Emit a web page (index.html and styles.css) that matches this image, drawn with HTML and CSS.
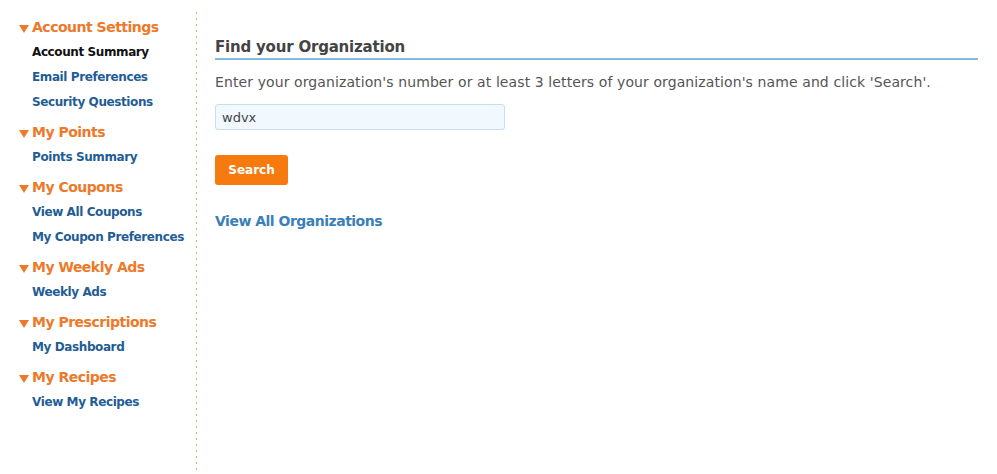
FILE: index.html
```html
<!DOCTYPE html>
<html>
<head>
<meta charset="utf-8">
<link rel="stylesheet" href="styles.css">
</head>
<body>
<div class="page">
  <nav class="sidebar">
    <div class="group">
      <div class="group-title"><span class="tri"></span>Account Settings</div>
      <a class="item current">Account Summary</a>
      <a class="item">Email Preferences</a>
      <a class="item">Security Questions</a>
    </div>
    <div class="group">
      <div class="group-title"><span class="tri"></span>My Points</div>
      <a class="item">Points Summary</a>
    </div>
    <div class="group">
      <div class="group-title"><span class="tri"></span>My Coupons</div>
      <a class="item">View All Coupons</a>
      <a class="item">My Coupon Preferences</a>
    </div>
    <div class="group">
      <div class="group-title"><span class="tri"></span>My Weekly Ads</div>
      <a class="item">Weekly Ads</a>
    </div>
    <div class="group">
      <div class="group-title"><span class="tri"></span>My Prescriptions</div>
      <a class="item">My Dashboard</a>
    </div>
    <div class="group">
      <div class="group-title"><span class="tri"></span>My Recipes</div>
      <a class="item">View My Recipes</a>
    </div>
  </nav>
  <div class="divider"></div>
  <main class="content">
    <h2 class="title">Find your Organization</h2>
    <p class="intro">Enter your organization's number or at least 3 letters of your organization's name and click 'Search'.</p>
    <input class="search-input" type="text" value="wdvx">
    <div><button class="btn">Search</button></div>
    <a class="all-link">View All Organizations</a>
  </main>
</div>
</body>
</html>
```
FILE: styles.css
```css
html, body {
  margin: 0;
  padding: 0;
  background: #fff;
}
body {
  font-family: "DejaVu Sans", Verdana, sans-serif;
  height: 474px;
  overflow: hidden;
}
.page {
  display: flex;
  height: 474px;
}
.sidebar {
  width: 178px;
  padding: 18px 0 0 18px;
  display: flex;
  flex-direction: column;
  gap: 8px;
}
.divider {
  width: 1px;
  margin-top: 12px;
  background-image: repeating-linear-gradient(to bottom, #e3ad78 0, #e3ad78 2px, transparent 2px, transparent 6px);
}
.group {
  display: flex;
  flex-direction: column;
}
.group-title {
  color: #ec7a2a;
  font-weight: bold;
  font-size: 14px;
  height: 18px;
  line-height: 18px;
  display: flex;
  align-items: center;
  letter-spacing: -0.5px;
}
.tri {
  width: 0;
  height: 0;
  border-left: 5px solid transparent;
  border-right: 5px solid transparent;
  border-top: 8px solid #ec7a2a;
  margin: 3px 3px 0 1px;
}
.item {
  display: block;
  color: #1f5d94;
  font-weight: bold;
  font-size: 12px;
  height: 25px;
  line-height: 25px;
  padding-left: 14px;
  letter-spacing: -0.4px;
}
.group-title + .item {
  margin-top: 4px;
}
.item.current {
  color: #111;
}
.content {
  flex: 1;
  padding: 38px 19px 0 18px;
}
.title {
  margin: 0;
  font-size: 15px;
  color: #444;
  font-weight: bold;
  padding-bottom: 1px;
  border-bottom: 2px solid #85b8dc;
  line-height: 19px;
  letter-spacing: -0.2px;
}
.intro {
  margin: 13px 0 0;
  font-size: 14px;
  color: #555;
  line-height: 18px;
  letter-spacing: 0.1px;
}
.search-input {
  display: block;
  margin-top: 13px;
  width: 290px;
  height: 26px;
  box-sizing: border-box;
  border: 1px solid #c5def0;
  border-radius: 3px;
  background: #f1f8fe;
  font-family: "DejaVu Sans", Verdana, sans-serif;
  font-size: 13px;
  color: #444;
  padding: 0 6px;
}
.btn {
  margin-top: 25px;
  width: 73px;
  height: 30px;
  border: none;
  border-radius: 3px;
  background: #f77a0f;
  color: #fff;
  font-family: "DejaVu Sans", Verdana, sans-serif;
  font-weight: bold;
  font-size: 12px;
  padding: 0;
}
.all-link {
  display: block;
  margin-top: 28px;
  font-size: 14px;
  font-weight: bold;
  color: #3a80b8;
  letter-spacing: -0.5px;
}
```
